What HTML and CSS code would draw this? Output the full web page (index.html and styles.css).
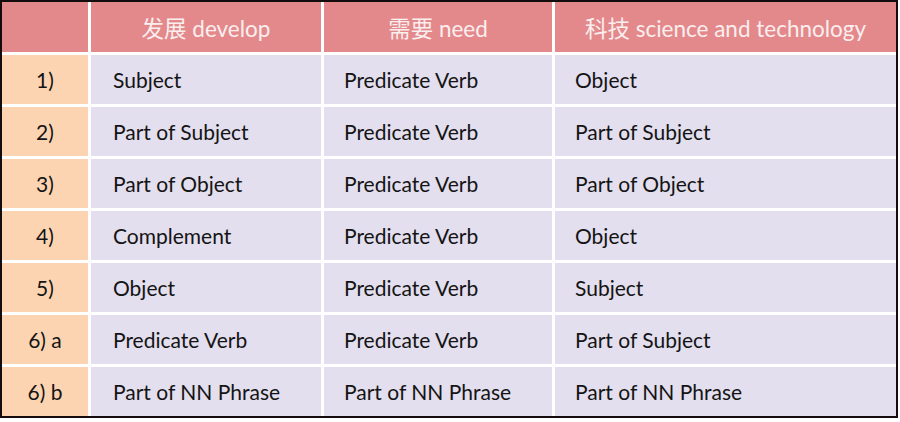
FILE: index.html
```html
<!DOCTYPE html>
<html lang="zh">
<head>
<meta charset="utf-8">
<link rel="stylesheet" href="styles.css">
</head>
<body>
<div class="grid">
  <div class="cell head"></div>
  <div class="cell head">发展 develop</div>
  <div class="cell head">需要 need</div>
  <div class="cell head">科技 science and technology</div>

  <div class="cell num">1)</div><div class="cell">Subject</div><div class="cell">Predicate Verb</div><div class="cell">Object</div>
  <div class="cell num">2)</div><div class="cell">Part of Subject</div><div class="cell">Predicate Verb</div><div class="cell">Part of Subject</div>
  <div class="cell num">3)</div><div class="cell">Part of Object</div><div class="cell">Predicate Verb</div><div class="cell">Part of Object</div>
  <div class="cell num">4)</div><div class="cell">Complement</div><div class="cell">Predicate Verb</div><div class="cell">Object</div>
  <div class="cell num">5)</div><div class="cell">Object</div><div class="cell">Predicate Verb</div><div class="cell">Subject</div>
  <div class="cell num">6) a</div><div class="cell">Predicate Verb</div><div class="cell">Predicate Verb</div><div class="cell">Part of Subject</div>
  <div class="cell num">6) b</div><div class="cell">Part of NN Phrase</div><div class="cell">Part of NN Phrase</div><div class="cell">Part of NN Phrase</div>
</div>
</body>
</html>
```

FILE: styles.css
```css
html, body {
  margin: 0;
  padding: 0;
  background: #ffffff;
}

.grid {
  width: 894px;
  display: grid;
  grid-template-columns: 86px 230px 228px 341px;
  grid-template-rows: 50px repeat(7, 49px);
  gap: 3px;
  background: #ffffff;
  border: 2px solid #140c0c;
  font-family: Lato, "Noto Sans CJK SC", sans-serif;
  font-size: 21px;
  color: #141414;
}

.cell {
  background: #e3dfee;
  display: flex;
  align-items: center;
  padding-left: 20px;
  white-space: nowrap;
}

.grid > .cell:nth-child(4n+2) {
  padding-left: 22px;
}

.head {
  background: #e3898c;
  color: #fbeeee;
  font-size: 22.5px;
  justify-content: center;
  padding-left: 0;
}

.grid > .head:nth-child(4n+2) {
  padding-left: 0;
}

.num {
  background: #fdd4b2;
  justify-content: center;
  padding-left: 0;
}
```
